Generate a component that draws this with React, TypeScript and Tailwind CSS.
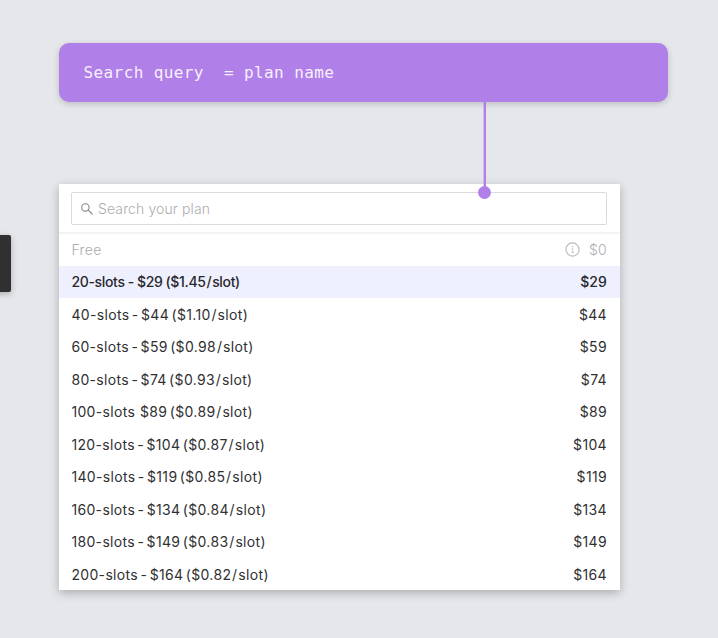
type Plan = { label: string; price: string; rate: string };

const plans: Plan[] = [
  { label: "20-slots -", price: "$29", rate: "$1.45" },
  { label: "40-slots -", price: "$44", rate: "$1.10" },
  { label: "60-slots -", price: "$59", rate: "$0.98" },
  { label: "80-slots -", price: "$74", rate: "$0.93" },
  { label: "100-slots ", price: "$89", rate: "$0.89" },
  { label: "120-slots -", price: "$104", rate: "$0.87" },
  { label: "140-slots -", price: "$119", rate: "$0.85" },
  { label: "160-slots -", price: "$134", rate: "$0.84" },
  { label: "180-slots -", price: "$149", rate: "$0.83" },
  { label: "200-slots -", price: "$164", rate: "$0.82" },
];

function PlanRow({ plan, selected }: { plan: Plan; selected: boolean }) {
  return (
    <li
      className={
        selected
          ? "flex h-[32.5px] items-center justify-between bg-[#eff0fe] pl-[12.4px] pr-[12.5px] font-medium tracking-[-0.33px] text-[#28282c] [word-spacing:-0.3px]"
          : "flex h-[32.5px] items-center justify-between pl-[12.4px] pr-[12.5px] tracking-[0.34px] text-[#303032] [word-spacing:-1.9px]"
      }
    >
      <span className="whitespace-pre">
        {`${plan.label} ${plan.price} (${plan.rate}`}
        <span className="px-[0.8px]">/</span>
        {"slot)"}
      </span>
      <span className={selected ? "tracking-[0.1px]" : ""}>{plan.price}</span>
    </li>
  );
}

export default function App() {
  return (
    <main className="relative h-[638px] w-[718px] overflow-hidden bg-[#e5e7eb] pl-[59px] pt-[43px] font-['Inter',sans-serif] text-[14px]">
      <div className="absolute left-[-10px] top-[235px] h-[57px] w-[20.5px] rounded-[2px] bg-[#303030] shadow-[0_2px_6px_rgba(0,0,0,0.25)]" />

      <div className="flex h-[59px] w-[609px] items-center rounded-[10px] bg-[#b07fe8] pl-[24.5px] shadow-[0_2px_6px_rgba(0,0,0,0.18)]">
        <span className="whitespace-pre font-['DejaVu_Sans_Mono',monospace] text-[16px] tracking-[0.4px] text-[#f7effe]">
          {"Search query  = plan name"}
        </span>
      </div>

      <section className="mt-[82px] h-[406px] w-[560.5px] bg-white shadow-[0_3px_9px_rgba(0,0,0,0.25)]">
        <div className="h-[50px] border-b-2 border-[#f4f4f5] pl-3 pr-[13px] pt-2">
          <div className="flex h-[33px] items-center rounded-[2px] border border-[#dadadc] pl-[9px] text-[#adadaf]">
            <svg className="mr-[5px] h-3 w-3" viewBox="0 0 12 12" fill="none" stroke="#858587" strokeWidth="1.1" strokeLinecap="round">
              <circle cx="4.4" cy="4.4" r="3.7" />
              <path d="M7.2 7.2 11.2 11" />
            </svg>
            <span className="font-light tracking-[0.12px]">Search your plan</span>
          </div>
        </div>
        <div className="flex h-[31.5px] items-center pl-[12.4px] pr-[12.5px] font-light text-[#acacae]">
          <span className="flex-1 tracking-[0.4px]">Free</span>
          <svg className="mr-[9px] h-[15px] w-[15px]" viewBox="0 0 15 15" fill="none" stroke="#b8b8ba">
            <circle cx="7.5" cy="7.5" r="6.6" strokeWidth="1.1" />
            <path d="M6.5 6.4h1.1v3.9M6.2 10.5h2.8" strokeWidth="0.7" />
            <circle cx="7.4" cy="4.5" r="0.65" fill="#b8b8ba" stroke="none" />
          </svg>
          <span className="tracking-[0.3px]">$0</span>
        </div>
        <ul>
          {plans.map((plan, i) => (
            <PlanRow key={plan.label} plan={plan} selected={i === 0} />
          ))}
        </ul>
      </section>

      <div className="absolute left-[483px] top-[101px] flex h-[90px] w-[3px] justify-center bg-[#b07fe8]/40">
        <div className="w-[2px] bg-[#b07fe8]" />
      </div>
      <div className="absolute left-[478px] top-[186px] h-[12.5px] w-[12.5px] rounded-full bg-[#b07fe8]" />
    </main>
  );
}
